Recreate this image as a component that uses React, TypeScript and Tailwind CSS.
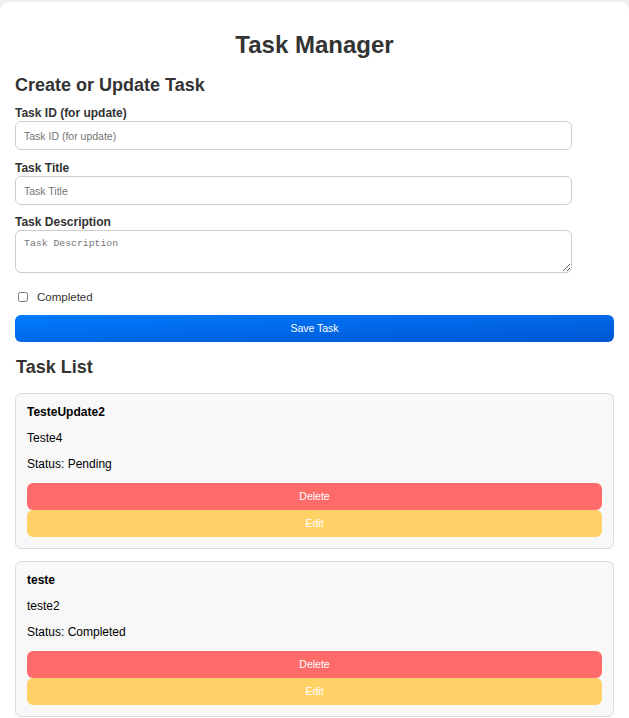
import React from "react";

const tasks = [
  { title: "TesteUpdate2", desc: "Teste4", status: "Pending" },
  { title: "teste", desc: "teste2", status: "Completed" },
];

export default function App() {
  return (
    <div className="min-h-[718px] bg-[#f4f4f4] pt-[2px]" style={{ fontFamily: '"Liberation Sans", Arial, sans-serif' }}>
      <div className="bg-white rounded-lg shadow-[0_0_8px_rgba(0,0,0,0.08)] px-[15px] pt-[29px] pb-[20px] text-[#333]">
        <h1 className="text-[24px] leading-[28px] font-bold text-center">Task Manager</h1>
        <h2 className="mt-[15px] text-[18px] leading-[22px] font-bold">Create or Update Task</h2>

        <label className="block mt-[10px] text-[12px] leading-[14px] font-bold">Task ID (for update)</label>
        <input
          className="mt-[1px] block w-[557px] h-[29px] border border-[#ccc] rounded-[6px] px-[8px] text-[10.5px] placeholder:text-[#757575] outline-none"
          placeholder="Task ID (for update)"
        />

        <label className="block mt-[11px] text-[12px] leading-[14px] font-bold">Task Title</label>
        <input
          className="mt-[1px] block w-[557px] h-[29px] border border-[#ccc] rounded-[6px] px-[8px] text-[10.5px] placeholder:text-[#757575] outline-none"
          placeholder="Task Title"
        />

        <label className="block mt-[10px] text-[12px] leading-[14px] font-bold">Task Description</label>
        <textarea
          className="mt-[1px] block w-[557px] h-[43px] border border-[#ccc] rounded-[6px] px-[8px] py-[7px] text-[9.8px] leading-[12px] placeholder:text-[#757575] outline-none"
          style={{ fontFamily: '"Liberation Mono", monospace' }}
          placeholder="Task Description"
        />

        <div className="mt-[17px] flex items-center h-[14px]">
          <input type="checkbox" className="ml-[3px] w-[10px] h-[10px]" />
          <span className="ml-[9px] text-[11.5px] leading-[14px]">Completed</span>
        </div>

        <button className="mt-[11px] block w-full h-[27px] rounded-[6px] bg-gradient-to-br from-[#007bff] to-[#0056d2] text-white text-[10.5px]">
          Save Task
        </button>

        <h2 className="mt-[14px] ml-[1px] text-[18px] leading-[22px] font-bold">Task List</h2>

        <div className="mt-[15px] flex flex-col gap-[12px]">
          {tasks.map((t) => (
            <div key={t.title} className="bg-[#f8f8f8] border border-[#ddd] rounded-[6px] px-[11px] pt-[11px] pb-[11px] text-black">
              <div className="text-[12px] leading-[14px] font-bold">{t.title}</div>
              <div className="mt-[12px] text-[12px] leading-[14px]">{t.desc}</div>
              <div className="mt-[12px] text-[12px] leading-[14px]">Status: {t.status}</div>
              <button className="mt-[12px] block w-full h-[27px] rounded-[6px] bg-[#ff6b6b] text-white text-[10.5px]">Delete</button>
              <button className="block w-full h-[27px] rounded-[6px] bg-[#ffd166] text-white text-[10.5px]">Edit</button>
            </div>
          ))}
        </div>
      </div>
    </div>
  );
}
